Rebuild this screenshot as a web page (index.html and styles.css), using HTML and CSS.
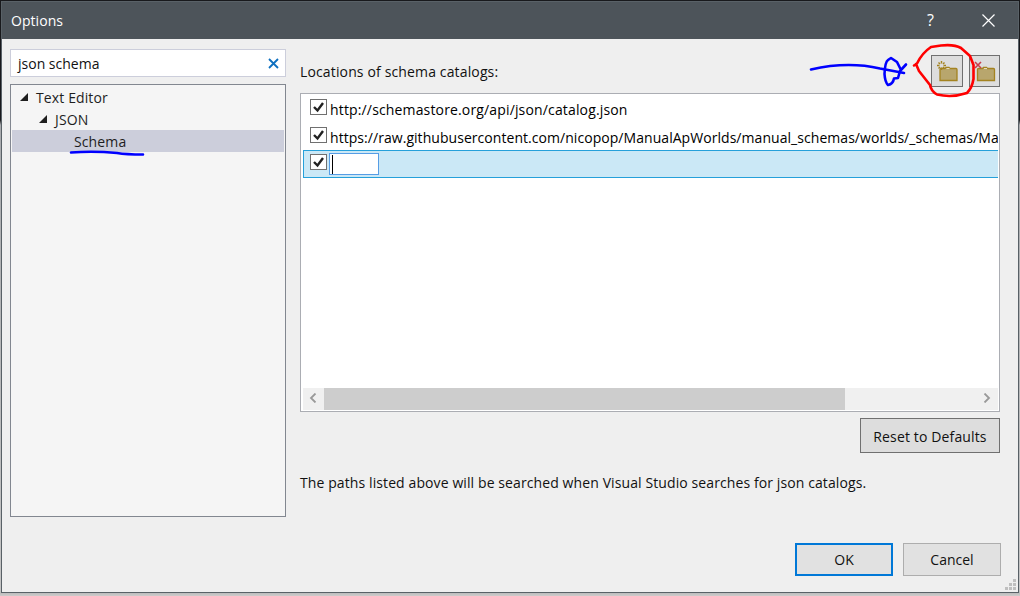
FILE: index.html
```html
<!DOCTYPE html>
<html lang="en">
<head>
<meta charset="utf-8">
<title>Options</title>
<link rel="stylesheet" href="styles.css">
</head>
<body>
<div class="dialog">
  <header class="titlebar">
    <span class="title">Options</span>
    <span class="help">?</span>
    <svg class="close" width="13" height="13" viewBox="0 0 13 13"><path d="M.5 .5l12 12M12.500 .5l-12 12"/></svg>
  </header>
  <main class="content">
    <aside class="sidebar">
      <div class="search">
        <span class="query">json schema</span>
        <svg width="11" height="11" viewBox="0 0 11 11"><path d="M1 1l9 9M10 1l-9 9"/></svg>
      </div>
      <div class="tree">
        <div class="node"><svg class="arrow" width="8" height="8"><path d="M8 0v8H0z"/></svg><span class="t-editor">Text Editor</span></div>
        <div class="node level2"><svg class="arrow" width="8" height="8"><path d="M8 0v8H0z"/></svg><span class="t-json">JSON</span></div>
        <div class="node level3 selected"><span class="t-schema">Schema</span></div>
      </div>
    </aside>
    <section class="panel">
      <div class="toolbar">
        <span class="label">Locations of schema catalogs:</span>
        <button class="tool add" aria-label="Add"><svg width="30" height="30" viewBox="0 0 30 30">
          <path class="folder" d="M8 13.500q0-1 1-1h4l1-1h3l1 1h6q1 0 1 1v11H8z"/><path class="folder-line" d="M14.500 12.500h3"/>
          <path class="spark" d="M9.500 5v2.500M9.500 11.500v2.500M5 9.500h2.500M11.500 9.500h2.500M6.500 6.500l1.500 1.500M11 11l1.500 1.500M12.500 6.500l-1.500 1.500M8 11l-1.500 1.500"/></svg></button>
        <button class="tool remove" aria-label="Remove"><svg width="29" height="30" viewBox="0 0 29 30">
          <path class="folder" d="M7.500 13.500q0-1 1-1h4l1-1h3l1 1h6q1 0 1 1v11h-17z"/><path class="folder-line" d="M14 12.500h3"/>
          <path class="cross" d="M5 6l6 6M11 6l-6 6"/></svg></button>
      </div>
      <div class="list">
        <div class="rows">
          <div class="row"><span class="check"><svg width="15" height="14" viewBox="0 0 15 14"><path d="M3 7l3.500 3.500L12 3"/></svg></span><span class="url u1">http://schemastore.org/api/json/catalog.json</span></div>
          <div class="row second"><span class="check"><svg width="15" height="14" viewBox="0 0 15 14"><path d="M3 7l3.500 3.500L12 3"/></svg></span><span class="url u2">https://raw.githubusercontent.com/nicopop/ManualApWorlds/manual_schemas/worlds/_schemas/Ma</span></div>
          <div class="row active"><span class="check"><svg width="15" height="14" viewBox="0 0 15 14"><path d="M3 7l3.500 3.500L12 3"/></svg></span><span class="edit"><i class="caret"></i></span></div>
        </div>
        <div class="scrollbar">
          <span class="step"><svg width="8" height="10" viewBox="0 0 8 10"><path d="M6.500 .5L2 5l4.500 4.500"/></svg></span>
          <span class="thumb"></span>
          <span class="step end"><svg width="8" height="10" viewBox="0 0 8 10"><path d="M1.500 .5L6 5l-4.500 4.500"/></svg></span>
        </div>
      </div>
      <button class="btn reset"><span>Reset to Defaults</span></button>
      <p class="note">The paths listed above will be searched when Visual Studio searches for json catalogs.</p>
    </section>
  </main>
  <footer class="footer">
    <button class="btn ok"><span>OK</span></button>
    <button class="btn cancel"><span>Cancel</span></button>
  </footer>
  <svg class="grip" width="11" height="11" viewBox="0 0 11 11"><path d="M8 0h3v3H8zM4 4h3v3H4zM8 4h3v3H8zM0 8h3v3H0zM4 8h3v3H4zM8 8h3v3H8z"/></svg>
</div>
<svg class="ink" width="1020" height="596" viewBox="0 0 1020 596">
  <g class="blue">
    <path d="M71 152.500C83 151.500 102 151.500 117 153Q126 154.500 143 154.500"/>
    <path d="M811 69.500C835 64 858 63.500 880 68.500L904 73"/>
    <path d="M906 64.500L900 71L898 78L894 78.500Q893 84 888 85Q885 82 884.500 74Q885 62 888 60L891 58L897 62L901 70"/>
  </g>
  <path class="red" d="M914 65.500L917 63.500Q922 53 931 47L941 45.500Q954 44 961 48L970 56L973.500 65V79Q972 88 967 93Q952 98 937 94.500Q931 91 930 85L919 71L916 64"/>
</svg>
</body>
</html>
```
FILE: styles.css
```css
* { box-sizing: border-box; }
body {
  margin: 0;
  width: 1020px;
  height: 596px;
  overflow: hidden;
  position: relative;
  padding: 1px;
  background: linear-gradient(to bottom, #18191c 0, #18191c 120px, #a9abae 125px, #c5c5c5 590px, #bcbcbc 593px, #cecccc 596px);
  font: 14px/20px "Open Sans", "Noto Sans", sans-serif;
  color: #111;
}
span { white-space: nowrap; }
button { font: inherit; color: inherit; padding: 0; }
svg { display: block; flex: none; }
path { fill: none; }
.dialog {
  position: relative;
  width: 1018px;
  height: 592px;
  border: 1px solid #596167;
  background: #efefef;
}
.titlebar {
  display: flex;
  align-items: center;
  height: 37px;
  padding: 0 23px 0 9px;
  background: #4d545a;
  color: #fff;
}
.title { flex: 1; letter-spacing: .05px; }
.help { width: 9px; margin-right: 46px; padding-bottom: 2px; font-size: 16px; }
.close path { stroke: #fff; stroke-width: 1.2; }
.content { display: flex; gap: 14px; padding: 10px 0 0 8px; }
.sidebar { width: 276px; }
.search {
  display: flex;
  align-items: center;
  justify-content: space-between;
  height: 28px;
  padding: 0 6px 0 7px;
  border: 1px solid #cccedb;
  background: #fff;
}
.query { padding-top: 2px; }
.search path { stroke: #0e70c0; stroke-width: 1.8; }
.tree { height: 433px; margin-top: 7px; padding: 1px; border: 1px solid #828790; background: #f5f5f5; }
.node { display: flex; align-items: center; height: 22px; padding-left: 8px; gap: 8px; color: #1e1e1e; }
.node span { padding-top: 2px; letter-spacing: .12px; }
.level2 { padding-left: 27px; }
.level3 { padding-left: 62px; }
.selected { background: #cccedb; }
.arrow path { fill: #1e1e1e; }
.panel { width: 700px; display: flex; flex-direction: column; }
.toolbar { display: flex; height: 38px; margin-top: 6px; }
.label { flex: 1; padding-top: 7px; letter-spacing: .14px; }
.tool { width: 32px; height: 32px; border: 1px solid #707070; background: #ddd; }
.remove { width: 31px; margin-left: 6px; }
.folder { fill: #b8a66d; stroke: #a48320; stroke-width: 1.3; }
.folder-line { stroke: #e6dcbc; }
.spark { stroke: #a48320; stroke-width: 1.4; }
.cross { stroke: #c93e4b; stroke-width: 1.6; }
.list { height: 319px; border: 1px solid #abadb3; padding: 1px 1px 1px 2px; background: #fff; display: flex; flex-direction: column; }
.rows { flex: 1; overflow: hidden; }
.row { display: flex; height: 27px; padding: 4px 0 0 7px; overflow: hidden; }
.second { height: 28px; padding-top: 5px; }
.active { height: 28px; padding-top: 1px; padding-left: 6px; border: 1px solid #26a0da; border-right: 0; background: #cbe8f6; }
.check { width: 17px; height: 16px; border: 1px solid #707070; background: #fff; flex: none; }
.active .check { margin-top: 2px; }
.check path { stroke: #212121; stroke-width: 2.4; }
.url { margin: 1px 0 0 3px; color: #000; }
.u1 { letter-spacing: .15px; }
.u2 { letter-spacing: .05px; }
.edit { width: 50px; height: 22px; margin: 1px 0 0 2px; padding: 1px 2px; border: 1px solid #569de5; background: #fff; }
.caret { display: block; width: 1px; height: 19px; background: #000; }
.scrollbar { display: flex; height: 22px; background: #f0f0f0; }
.step { display: flex; align-items: center; justify-content: center; width: 21px; padding: 0 1px 2px 0; }
.step path { stroke: #999; stroke-width: 1.8; }
.thumb { width: 521px; background: #cdcdcd; }
.end { margin-left: auto; padding-right: 2px; }
.btn { border: 1px solid #adadad; background: #e1e1e1; height: 33px; }
.reset { align-self: flex-end; width: 140px; height: 35px; margin-top: 6px; padding-top: 2px; border-color: #707070; background: #ddd; letter-spacing: .14px; }
.note { margin: 20px 0 0; white-space: nowrap; letter-spacing: .1px; }
.footer { display: flex; justify-content: flex-end; gap: 10px; margin: 26px 17px 0 0; }
.ok, .cancel { width: 98px; }
.ok { border: 2px solid #0078d7; }
.grip { position: absolute; right: 2px; bottom: 2px; }
.grip path { fill: #bfbfbf; }
.ink { position: absolute; left: 0; top: 0; pointer-events: none; }
.ink path { stroke-width: 2.6; stroke-linecap: round; stroke-linejoin: round; }
.blue path { stroke: #00f; }
.ink .red { stroke: #f00; }
```
